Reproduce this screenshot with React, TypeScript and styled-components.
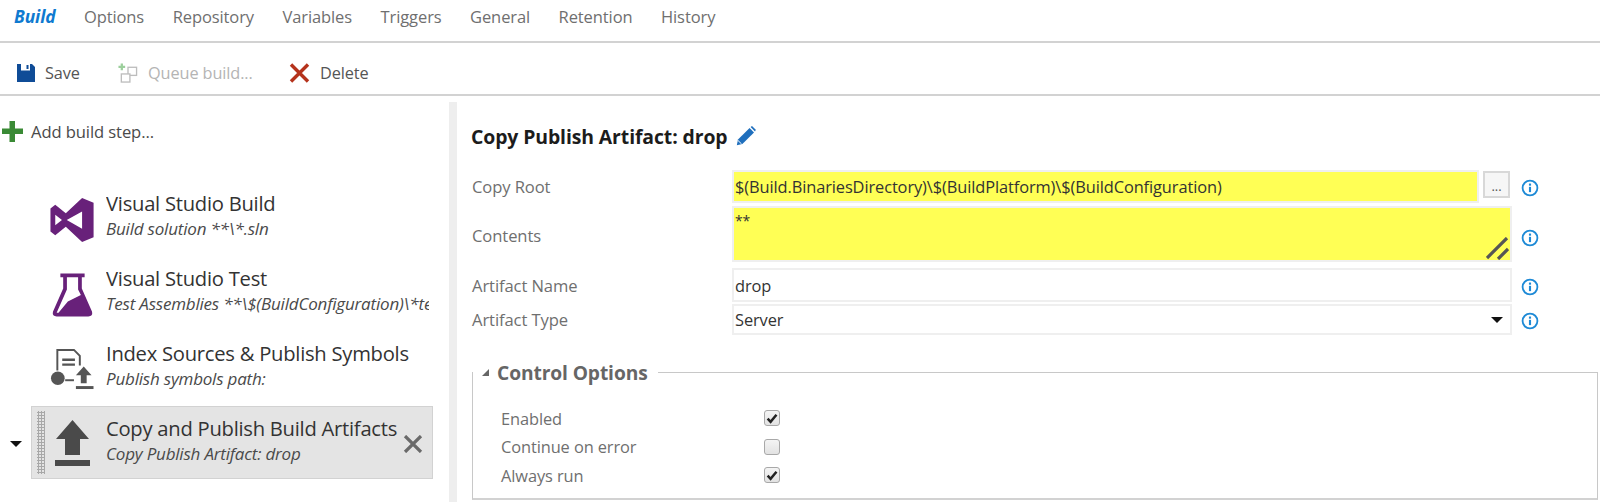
import React from "react";
import styled, { createGlobalStyle } from "styled-components";

const Global = createGlobalStyle`
  html, body { margin: 0; padding: 0; background: #fff; }
  body { font-family: "Open Sans", "Noto Sans", sans-serif; width: 1600px; height: 502px; overflow: hidden; }
`;

const Page = styled.div`
  width: 1600px;
  height: 502px;
  display: flex;
  flex-direction: column;
`;

const Tabs = styled.nav`
  height: 41px;
  border-bottom: 2px solid #d2d2d2;
  display: flex;
  align-items: flex-start;
  padding-left: 14px;
  gap: 28.5px;
`;

const Tab = styled.span<{ $active?: boolean }>`
  margin-top: 5px;
  font-size: ${(p) => (p.$active ? 17.4 : 16.5)}px;
  line-height: 23px;
  letter-spacing: -0.1px;
  color: ${(p) => (p.$active ? "#0f7ad0" : "#6f6f6f")};
  font-weight: ${(p) => (p.$active ? 700 : 400)};
  font-style: ${(p) => (p.$active ? "italic" : "normal")};
`;

const Toolbar = styled.div`
  height: 42px;
  border-bottom: 2px solid #d2d2d2;
  display: flex;
  align-items: center;
  padding: 9px 0 0 17px;
`;

const ToolButton = styled.span<{ $disabled?: boolean; $w: number }>`
  display: flex;
  align-items: center;
  width: ${(p) => p.$w}px;
  gap: 10px;
  font-size: 16.3px;
  letter-spacing: -0.1px;
  color: ${(p) => (p.$disabled ? "#b4b4b4" : "#555")};
`;

const Main = styled.div`
  flex: 1;
  display: flex;
  min-height: 0;
  padding-top: 6px;
`;

const Left = styled.aside`
  width: 449px;
  flex: none;
  display: flex;
  flex-direction: column;
`;

const AddStep = styled.div`
  display: flex;
  align-items: center;
  gap: 8px;
  margin: 19px 0 0 2px;
  height: 21px;
  font-size: 16.6px;
  letter-spacing: -0.1px;
  color: #4a4a4a;
`;

const StepList = styled.div`
  margin-top: 39px;
  display: flex;
  flex-direction: column;
  gap: 2px;
`;

const StepRow = styled.div`
  display: flex;
  align-items: center;
  position: relative;
  height: 73px;
  padding-left: 31px;
`;

const Caret = styled.span`
  position: absolute;
  left: 10px;
  top: 35px;
  width: 0;
  height: 0;
  border-left: 6px solid transparent;
  border-right: 6px solid transparent;
  border-top: 6px solid #111;
`;

const StepCard = styled.div<{ $selected?: boolean }>`
  width: 402px;
  height: 73px;
  box-sizing: border-box;
  display: flex;
  align-items: center;
  background: ${(p) => (p.$selected ? "#e4e4e4" : "transparent")};
  border: 1px solid ${(p) => (p.$selected ? "#d2d2d2" : "transparent")};
  position: relative;
`;

const Grip = styled.span<{ $show?: boolean }>`
  width: 8px;
  height: 63px;
  margin-left: 5px;
  flex: none;
  opacity: ${(p) => (p.$show ? 1 : 0)};
  background-image: radial-gradient(#a8a8a8 1px, transparent 1.2px);
  background-size: 3px 3px;
`;

const IconSlot = styled.span<{ $down: number }>`
  width: 54px;
  margin-right: 7px;
  flex: none;
  display: flex;
  justify-content: center;
  align-items: center;
  padding-top: ${(p) => p.$down}px;
`;

const StepText = styled.div`
  width: 323px;
  flex: none;
  overflow: hidden;
  white-space: nowrap;
  padding-bottom: 4px;
`;

const StepTitle = styled.div`
  font-size: 20.2px;
  line-height: 26px;
  letter-spacing: -0.25px;
  color: #333;
`;

const StepSub = styled.div`
  font-size: 17px;
  line-height: 26px;
  font-style: italic;
  letter-spacing: -0.2px;
  color: #4a4a4a;
`;

const RemoveIcon = styled.span`
  position: absolute;
  right: 9px;
  top: 28px;
  display: flex;
`;

const Splitter = styled.div`
  width: 8px;
  flex: none;
  background: #eeeeee;
`;

const Right = styled.section`
  flex: 1;
  min-width: 0;
  padding: 0 2px 0 15px;
  display: flex;
  flex-direction: column;
`;

const Heading = styled.h2`
  margin: 22px 0 0 -1px;
  height: 24px;
  display: flex;
  align-items: center;
  gap: 8px;
  font-size: 19.4px;
  font-weight: 700;
  letter-spacing: -0.1px;
  color: #1c1c1c;
`;

const Form = styled.div`
  margin-top: 22px;
  display: grid;
  grid-template-columns: 260px 747px 4px 29px 1fr;
  grid-template-rows: 36px 62px 36px 31px;
  align-items: start;
`;

const Label = styled.label<{ $h: number }>`
  height: ${(p) => p.$h}px;
  display: flex;
  align-items: center;
  font-size: 16.6px;
  letter-spacing: -0.1px;
  color: #6f6f6f;
`;

const inputBase = `
  box-sizing: border-box;
  border: 2px solid #efefef;
  font-size: 16.4px;
  letter-spacing: -0.1px;
  color: #333;
  padding: 0 1px;
  display: flex;
  align-items: center;
`;

const TextField = styled.div<{ $yellow?: boolean; $h: number }>`
  ${inputBase}
  width: 100%;
  height: ${(p) => p.$h}px;
  background: ${(p) => (p.$yellow ? "#ffff55" : "#fff")};
  white-space: nowrap;
`;

const WideCell = styled.div`
  grid-column: 2 / 5;
  display: flex;
`;

const Area = styled.div`
  ${inputBase}
  width: 100%;
  height: 56px;
  background: #ffff55;
  align-items: flex-start;
  padding-top: 3px;
  font-size: 14px;
  position: relative;
`;

const Grabber = styled.svg`
  position: absolute;
  right: 1px;
  bottom: 0;
`;

const Browse = styled.span`
  grid-column: 4;
  width: 27px;
  height: 27px;
  margin-top: 1px;
  box-sizing: border-box;
  border: 2px solid #d8d8d8;
  background: #f6f6f6;
  display: flex;
  justify-content: center;
  align-items: flex-end;
  font-size: 13px;
  line-height: 20px;
  color: #555;
`;

const InfoCell = styled.span<{ $h: number }>`
  grid-column: 5;
  height: ${(p) => p.$h}px;
  padding-left: 9px;
  display: flex;
  align-items: center;
`;

const SelectArrow = styled.span`
  margin-left: auto;
  margin-right: 6px;
  width: 0;
  height: 0;
  border-left: 6px solid transparent;
  border-right: 6px solid transparent;
  border-top: 6px solid #111;
`;

const Fieldset = styled.div`
  margin-top: 37px;
  height: 128px;
  box-sizing: border-box;
  border-left: 1px solid #c8c8c8;
  border-bottom: 2px solid #d2d2d2;
  border-right: 1px solid #c8c8c8;
  position: relative;
  padding: 32px 0 0 28px;
`;

const Legend = styled.div`
  position: absolute;
  left: 0;
  right: 0;
  top: -12px;
  height: 24px;
  display: flex;
  align-items: center;
  font-size: 19.2px;
  font-weight: 700;
  letter-spacing: -0.1px;
  color: #666;
  &::after {
    content: "";
    flex: 1;
    height: 1px;
    background: #c8c8c8;
    margin-left: 10px;
  }
`;

const LegendCaret = styled.svg`
  margin: 0 7px 0 8px;
`;

const CheckRow = styled.div`
  height: 28.5px;
  display: flex;
  align-items: center;
  font-size: 16.4px;
  letter-spacing: -0.1px;
  color: #6f6f6f;
`;

const CheckLabel = styled.span`
  width: 263px;
`;

const Check = styled.span`
  width: 16px;
  height: 16px;
  box-sizing: border-box;
  border: 1px solid #a8a8a8;
  border-radius: 3px;
  background: linear-gradient(#f4f4f4, #e2e2e2);
  display: flex;
  align-items: center;
  justify-content: center;
`;

const Info = () => (
  <svg width="18" height="18" viewBox="0 0 17 17">
    <circle cx="8.5" cy="8.5" r="7" fill="#fff" stroke="#1e8ad6" strokeWidth="1.7" />
    <rect x="7.5" y="7.4" width="2" height="5" fill="#1e8ad6" />
    <rect x="7.5" y="4.3" width="2" height="2" fill="#1e8ad6" />
  </svg>
);

const CheckMark = () => (
  <svg width="12" height="11" viewBox="0 0 11 10">
    <path d="M1.5 5.2 L4.2 8 L9.6 1.6" fill="none" stroke="#222" strokeWidth="2.3" />
  </svg>
);

const SaveIcon = () => (
  <svg width="18" height="18" viewBox="0 0 18 18">
    <path d="M0 0H15L18 3V18H0Z" fill="#0f4c97" />
    <rect x="4" y="0" width="9" height="6.5" fill="#fff" />
    <rect x="9.5" y="1" width="2" height="4" fill="#0f4c97" />
    <rect x="3" y="11" width="12" height="7" fill="#0f4c97" />
  </svg>
);

const QueueIcon = () => (
  <svg width="20" height="20" viewBox="0 0 21 21">
    <path d="M4 0.5V7.5M0.5 4H7.5" stroke="#9ccf9c" strokeWidth="2.4" fill="none" />
    <rect x="10.5" y="4.5" width="9" height="8.5" fill="#fff" stroke="#bdbdbd" strokeWidth="1.4" />
    <rect x="3.5" y="11.5" width="9" height="8.5" fill="#fff" stroke="#bdbdbd" strokeWidth="1.4" />
  </svg>
);

const DeleteIcon = () => (
  <svg width="21" height="20" viewBox="0 0 21 19">
    <path d="M2 1 L19 18 M19 1 L2 18" stroke="#b5331c" strokeWidth="3.4" fill="none" />
  </svg>
);

const PlusIcon = () => (
  <svg width="21" height="21" viewBox="0 0 21 21">
    <path d="M7.5 0H13V7.5H21V13H13V21H7.5V13H0V7.5H7.5Z" fill="#3a8a35" />
  </svg>
);

const PencilIcon = () => (
  <svg width="20" height="20" viewBox="0 0 20 20">
    <path d="M0.8 19.2 L2 13.6 L13.6 2 L18 6.4 L6.4 18 Z" fill="#1f6fbd" />
    <path d="M14.6 1 L16 0 L19.8 3.8 L19 5.4 Z" fill="#1f6fbd" />
    <path d="M2 14.5 L5.6 18" stroke="#fff" strokeWidth="1" />
  </svg>
);

const VsIcon = () => (
  <svg width="47" height="46" viewBox="0 0 48 48">
    <path
      d="M34 1 L46 6 V42 L34 47 L17 31 L6 40 L1 36 V12 L6 8 L17 17 Z M34 15 L18 24 L34 33 Z M6 18.5 V29.5 L13 24 Z"
      fill="#68217a"
      fillRule="evenodd"
    />
  </svg>
);

const FlaskIcon = () => (
  <svg width="41" height="46" viewBox="0 0 44 48">
    <path d="M9 1H35V5H32V17L43 42 Q44 47 39 47H5 Q0 47 1 42L12 17V5H9Z" fill="#68217a" />
    <path d="M16 5H28V18L31 24L17 31L7 43H5L16 18Z" fill="#fff" />
  </svg>
);

const SymbolsIcon = () => (
  <svg width="46" height="43" viewBox="0 0 46 44">
    <path d="M8 24V3H25L31 9V19" fill="none" stroke="#555" strokeWidth="2" />
    <path d="M13 13H26M13 18H26" stroke="#555" strokeWidth="2.4" />
    <circle cx="8.5" cy="32" r="7" fill="#555" />
    <path d="M16 34H25" stroke="#555" strokeWidth="2" />
    <path d="M35 20L43 29H38V37H32V29H27Z" fill="#555" />
    <rect x="27" y="40" width="18" height="3" fill="#555" />
  </svg>
);

const UploadIcon = () => (
  <svg width="35" height="47" viewBox="0 0 35 47">
    <path d="M17.5 0 L34 19 H25 V35 H10 V19 H1 Z" fill="#4a4a4a" />
    <rect x="0" y="40" width="35" height="6" fill="#4a4a4a" />
  </svg>
);

const CloseIcon = () => (
  <svg width="20" height="18" viewBox="0 0 20 18">
    <path d="M2 1 L18 17 M18 1 L2 17" stroke="#6a6a6a" strokeWidth="3.2" fill="none" />
  </svg>
);

const tabs = ["Build", "Options", "Repository", "Variables", "Triggers", "General", "Retention", "History"];

const steps = [
  { title: "Visual Studio Build", sub: "Build solution **\\*.sln", icon: <VsIcon />, down: 5 },
  { title: "Visual Studio Test", sub: "Test Assemblies **\\$(BuildConfiguration)\\*test*.dll", icon: <FlaskIcon />, down: 5 },
  { title: "Index Sources & Publish Symbols", sub: "Publish symbols path:", icon: <SymbolsIcon />, down: 1 },
  { title: "Copy and Publish Build Artifacts", sub: "Copy Publish Artifact: drop", icon: <UploadIcon />, down: 2, selected: true },
];

const checks = [
  { label: "Enabled", on: true },
  { label: "Continue on error", on: false },
  { label: "Always run", on: true },
];

export default function App() {
  return (
    <Page>
      <Global />
      <Tabs>
        {tabs.map((t, i) => (
          <Tab key={t} $active={i === 0}>{t}</Tab>
        ))}
      </Tabs>
      <Toolbar>
        <ToolButton $w={101}><SaveIcon />Save</ToolButton>
        <ToolButton $w={171} $disabled><QueueIcon />Queue build...</ToolButton>
        <ToolButton $w={100}><DeleteIcon />Delete</ToolButton>
      </Toolbar>
      <Main>
        <Left>
          <AddStep><PlusIcon />Add build step...</AddStep>
          <StepList>
            {steps.map((s) => (
              <StepRow key={s.title}>
                {s.selected && <Caret />}
                <StepCard $selected={s.selected}>
                  <Grip $show={s.selected} />
                  <IconSlot $down={s.down}>{s.icon}</IconSlot>
                  <StepText>
                    <StepTitle>{s.title}</StepTitle>
                    <StepSub>{s.sub}</StepSub>
                  </StepText>
                  {s.selected && <RemoveIcon><CloseIcon /></RemoveIcon>}
                </StepCard>
              </StepRow>
            ))}
          </StepList>
        </Left>
        <Splitter />
        <Right>
          <Heading>Copy Publish Artifact: drop <PencilIcon /></Heading>
          <Form>
            <Label $h={33}>Copy Root</Label>
            <TextField $yellow $h={33}>$(Build.BinariesDirectory)\$(BuildPlatform)\$(BuildConfiguration)</TextField>
            <Browse>...</Browse>
            <InfoCell $h={36}><Info /></InfoCell>

            <Label $h={58}>Contents</Label>
            <WideCell>
              <Area>
                **
                <Grabber width="23" height="23" viewBox="0 0 23 23">
                  <path d="M1 21L21 1M12 22L22 12" stroke="#555" strokeWidth="3.2" fill="none" />
                </Grabber>
              </Area>
            </WideCell>
            <InfoCell $h={64}><Info /></InfoCell>

            <Label $h={34}>Artifact Name</Label>
            <WideCell><TextField $h={34}>drop</TextField></WideCell>
            <InfoCell $h={38}><Info /></InfoCell>

            <Label $h={30}>Artifact Type</Label>
            <WideCell><TextField $h={31}>Server<SelectArrow /></TextField></WideCell>
            <InfoCell $h={34}><Info /></InfoCell>
          </Form>
          <Fieldset>
            <Legend>
              <LegendCaret width="9" height="9" viewBox="0 0 9 9"><path d="M8 1V8H1Z" fill="#666" /></LegendCaret>
              Control Options
            </Legend>
            {checks.map((c) => (
              <CheckRow key={c.label}>
                <CheckLabel>{c.label}</CheckLabel>
                <Check>{c.on && <CheckMark />}</Check>
              </CheckRow>
            ))}
          </Fieldset>
        </Right>
      </Main>
    </Page>
  );
}
